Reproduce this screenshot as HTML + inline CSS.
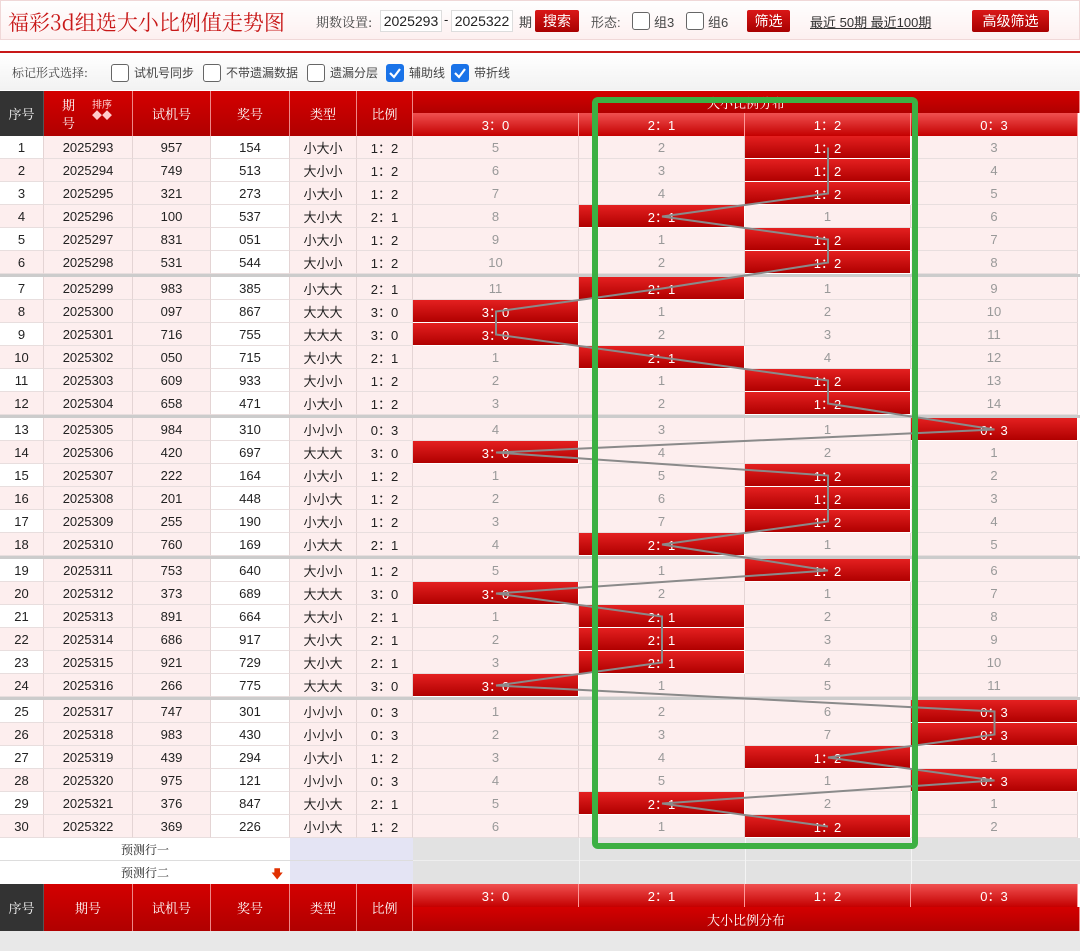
<!DOCTYPE html>
<html><head><meta charset="utf-8">
<style>
*{box-sizing:border-box;margin:0;padding:0}
body{width:1080px;height:939px;overflow:hidden;background:#fff;font-family:"Liberation Sans","Noto Sans CJK SC",sans-serif;position:relative;font-size:13px;color:#222}
.a{position:absolute}
.c{position:absolute;display:flex;align-items:center;justify-content:center;white-space:nowrap}
.btn{background:linear-gradient(#d91818,#a80000);color:#fff;border-radius:2px;font-size:14px}
.cb{position:absolute;width:18px;height:18px;border:1px solid #666;border-radius:3px;background:#fff}
.cb.on{background:#1a73e8;border-color:#1a73e8}
.hd{background:linear-gradient(#d40000,#b00000);color:#fff;font-family:"Noto Serif CJK SC",serif;font-size:13px;border-right:1px solid #e88}
.sub{background:linear-gradient(#f05050,#c40000);color:#fff;font-size:13px;border-right:1px solid #f99}
</style></head><body>
<div class="a" style="left:0;top:0;width:1080px;height:40px;background:linear-gradient(#fff,#fdf0f0);border:1px solid #f0d8d8"></div>
<div class="a" style="left:8px;top:7px;font-size:21px;color:#c81818;font-family:'Noto Serif CJK SC',serif">福彩3d组选大小比例值走势图</div>
<div class="a" style="left:316px;top:12px;font-size:13px;color:#444;font-family:'Noto Serif CJK SC',serif">期数设置:</div>
<div class="c" style="left:380px;top:10px;width:62px;height:22px;border:1px solid #ddd;background:#fff;font-size:14px">2025293</div>
<div class="a" style="left:444px;top:12px">-</div>
<div class="c" style="left:451px;top:10px;width:62px;height:22px;border:1px solid #ddd;background:#fff;font-size:14px">2025322</div>
<div class="a" style="left:519px;top:12px;color:#444">期</div>
<div class="c btn" style="left:535px;top:10px;width:44px;height:22px">搜索</div>
<div class="a" style="left:591px;top:12px;color:#555">形态:</div>
<div class="cb" style="left:632px;top:12px"></div><div class="a" style="left:654px;top:12px;color:#444">组3</div>
<div class="cb" style="left:686px;top:12px"></div><div class="a" style="left:708px;top:12px;color:#444">组6</div>
<div class="c btn" style="left:747px;top:10px;width:43px;height:22px">筛选</div>
<div class="a" style="left:810px;top:12px;color:#333;text-decoration:underline;font-size:13px">最近 50期 最近100期</div>
<div class="c btn" style="left:972px;top:10px;width:77px;height:22px">高级筛选</div>
<div class="a" style="left:0;top:51px;width:1080px;height:2px;background:#c81818"></div>
<div class="a" style="left:0;top:54px;width:1080px;height:36px;background:linear-gradient(#fff,#f2f2f2)"></div>
<div class="a" style="left:12px;top:64px;color:#444;font-family:'Noto Serif CJK SC',serif;font-size:12px">标记形式选择:</div>
<div class="cb" style="left:111px;top:64px"></div><div class="a" style="left:134px;top:64px;font-size:12px;color:#444">试机号同步</div>
<div class="cb" style="left:203px;top:64px"></div><div class="a" style="left:226px;top:64px;font-size:12px;color:#444">不带遗漏数据</div>
<div class="cb" style="left:307px;top:64px"></div><div class="a" style="left:330px;top:64px;font-size:12px;color:#444">遗漏分层</div>
<div class="cb on" style="left:386px;top:64px"><svg width="16" height="16"><path d="M3 8l4 4 6-8" stroke="#fff" stroke-width="2.2" fill="none"/></svg></div><div class="a" style="left:409px;top:64px;font-size:12px;color:#444">辅助线</div>
<div class="cb on" style="left:451px;top:64px"><svg width="16" height="16"><path d="M3 8l4 4 6-8" stroke="#fff" stroke-width="2.2" fill="none"/></svg></div><div class="a" style="left:474px;top:64px;font-size:12px;color:#444">带折线</div>
<div id="t"></div>
<script>
var X=[0,44,133,211,290,357,413,579,745,911,1078];
var D=[["2025293","957","154","小大小",1,[5,2,-1,3]],["2025294","749","513","大小小",1,[6,3,-1,4]],["2025295","321","273","小大小",1,[7,4,-1,5]],["2025296","100","537","大小大",2,[8,-1,1,6]],["2025297","831","051","小大小",1,[9,1,-1,7]],["2025298","531","544","大小小",1,[10,2,-1,8]],["2025299","983","385","小大大",2,[11,-1,1,9]],["2025300","097","867","大大大",3,[-1,1,2,10]],["2025301","716","755","大大大",3,[-1,2,3,11]],["2025302","050","715","大小大",2,[1,-1,4,12]],["2025303","609","933","大小小",1,[2,1,-1,13]],["2025304","658","471","小大小",1,[3,2,-1,14]],["2025305","984","310","小小小",0,[4,3,1,-1]],["2025306","420","697","大大大",3,[-1,4,2,1]],["2025307","222","164","小大小",1,[1,5,-1,2]],["2025308","201","448","小小大",1,[2,6,-1,3]],["2025309","255","190","小大小",1,[3,7,-1,4]],["2025310","760","169","小大大",2,[4,-1,1,5]],["2025311","753","640","大小小",1,[5,1,-1,6]],["2025312","373","689","大大大",3,[-1,2,1,7]],["2025313","891","664","大大小",2,[1,-1,2,8]],["2025314","686","917","大小大",2,[2,-1,3,9]],["2025315","921","729","大小大",2,[3,-1,4,10]],["2025316","266","775","大大大",3,[-1,1,5,11]],["2025317","747","301","小小小",0,[1,2,6,-1]],["2025318","983","430","小小小",0,[2,3,7,-1]],["2025319","439","294","小大小",1,[3,4,-1,1]],["2025320","975","121","小小小",0,[4,5,1,-1]],["2025321","376","847","大小大",2,[5,-1,2,1]],["2025322","369","226","小小大",1,[6,1,-1,2]]];
var R=["0：3","1：2","2：1","3：0"],L=["3：0","2：1","1：2","0：3"];
var h='',pts=[];
function c(x0,x1,y,hh,txt,st){return '<div class="c" style="left:'+x0+'px;top:'+y+'px;width:'+(x1-x0)+'px;height:'+hh+'px;'+st+'">'+txt+'</div>';}
// header
h+=c(0,44,91,45,'序号','background:#333;color:#fff;font-family:Noto Serif CJK SC,serif;border-right:1px solid #555');
h+='<div class="c hd" style="left:44px;top:91px;width:89px;height:45px;flex-direction:column;align-items:flex-start;padding-left:18px;line-height:18px">期<br>号</div><div class="a" style="left:92px;top:100px;color:#fcc;font-size:10px;line-height:11px">排序<br>◆◆</div>';
[['试机号',2],['奖号',3],['类型',4],['比例',5]].forEach(function(a){h+='<div class="c hd" style="left:'+X[a[1]]+'px;top:91px;width:'+(X[a[1]+1]-X[a[1]])+'px;height:45px">'+a[0]+'</div>';});
h+='<div class="c hd" style="left:413px;top:91px;width:667px;height:22px">大小比例分布</div>';
for(var k=0;k<4;k++)h+='<div class="c sub" style="left:'+X[6+k]+'px;top:113px;width:'+(X[7+k]-X[6+k])+'px;height:23px">'+L[k]+'</div>';
var y=136;
D.forEach(function(d,i){
 if(i>0&&i%6==0){h+='<div class="a" style="left:0;top:'+y+'px;width:1080px;height:3px;background:#ccc"></div>';y+=3;}
 var b='border-right:1px solid #e4d4d4;border-bottom:1px solid #e8dede;';
 h+=c(0,44,y,23,i+1,b+'background:'+(i%2?'#fdeeee':'#fff'));
 h+=c(44,133,y,23,d[0],b+'background:#fdeeee');
 h+=c(133,211,y,23,d[1],b+'background:#fdeeee');
 h+=c(211,290,y,23,d[2],b+'background:#fff');
 h+=c(290,357,y,23,d[3],b+'background:#fdeeee;font-family:Noto Sans CJK SC,sans-serif');
 h+=c(357,413,y,23,R[d[4]],b+'background:#fdeeee');
 for(var k=0;k<4;k++){var v=d[5][k];
  if(v<0){h+=c(X[6+k],X[7+k],y,23,L[k],'background:linear-gradient(#e42020,#b00000);color:#fff;border-bottom:1px solid #fff;border-right:1px solid #fff');pts.push(((X[6+k]+X[7+k])/2)+','+(y+11.5));}
  else h+=c(X[6+k],X[7+k],y,23,v,b+'background:#fdeeee;color:#999');}
 y+=23;});
// prediction rows
h+=c(0,290,y,23,'预测行一','background:#fff;border-bottom:1px solid #ddd;font-family:Noto Serif CJK SC,serif;font-size:12px');
h+=c(290,413,y,23,'','background:#e4e4f4;border-bottom:1px solid #ddd');
h+=c(413,1080,y,23,'','background:#e2e2e2;border-bottom:1px solid #eee');
y+=23;
h+=c(0,290,y,23,'预测行二','background:#fff;font-family:Noto Serif CJK SC,serif;font-size:12px')+'<div class="a" style="left:271px;top:'+(y+4)+'px;color:#e03000;font-size:12px">🡇</div>';
h+=c(290,413,y,23,'','background:#e4e4f4');
h+=c(413,1080,y,23,'','background:#e2e2e2');
y+=23;
for(var k=7;k<10;k++)h+='<div class="a" style="left:'+X[k]+'px;top:838px;width:1px;height:46px;background:#f4f4f4"></div>';
h+=c(0,44,y,47,'序号','background:#333;color:#fff;font-family:Noto Serif CJK SC,serif;border-right:1px solid #555');
[['期号',1],['试机号',2],['奖号',3],['类型',4],['比例',5]].forEach(function(a){h+='<div class="c hd" style="left:'+X[a[1]]+'px;top:'+y+'px;width:'+(X[a[1]+1]-X[a[1]])+'px;height:47px">'+a[0]+'</div>';});
for(var k=0;k<4;k++)h+='<div class="c sub" style="left:'+X[6+k]+'px;top:'+y+'px;width:'+(X[7+k]-X[6+k])+'px;height:23px">'+L[k]+'</div>';
h+='<div class="c hd" style="left:413px;top:'+(y+23)+'px;width:667px;height:24px">大小比例分布</div>';
y+=47;
h+='<div class="a" style="left:0;top:'+y+'px;width:1080px;height:20px;background:#e8e8e8"></div>';
h+='<svg class="a" style="left:0;top:0" width="1080" height="939"><polyline points="'+pts.join(' ')+'" fill="none" stroke="#8a8a8a" stroke-width="2"/><rect x="595" y="100" width="320" height="746" rx="3" fill="none" stroke="#3cb043" stroke-width="6"/></svg>';
document.getElementById('t').innerHTML=h;
</script>
</body></html>
